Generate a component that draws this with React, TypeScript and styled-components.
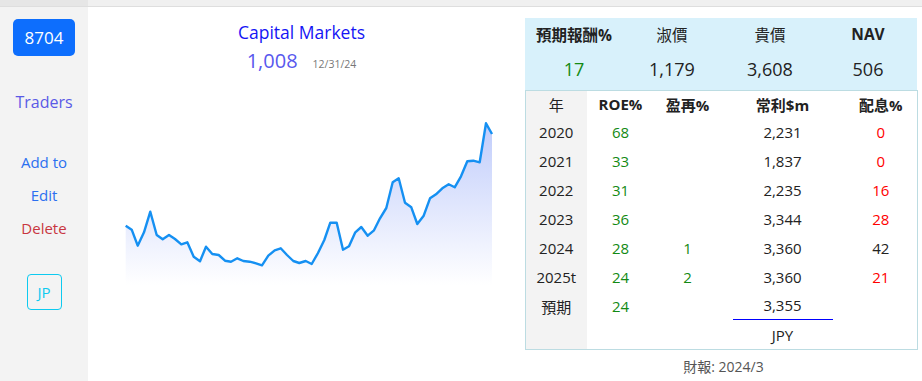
import React from "react";
import styled, { createGlobalStyle } from "styled-components";

const Global = createGlobalStyle`
  html, body { margin: 0; padding: 0; background: #fff; }
  body { font-family: "Open Sans", "Noto Sans CJK TC", sans-serif; color: #222; }
`;

const Page = styled.div`
  width: 922px;
  height: 381px;
  overflow: hidden;
  display: flex;
  flex-direction: column;
`;

const TopStrip = styled.div`
  height: 7px;
  display: flex;
  background: #f0f0f0;
  border-bottom: 1px solid #dedede;
  box-sizing: border-box;
`;

const TopStripSide = styled.div`
  width: 88px;
  background: #e6e6e6;
`;

const Main = styled.div`
  flex: 1;
  display: flex;
`;

const Sidebar = styled.div`
  width: 88px;
  background: #f3f3f3;
  display: flex;
  flex-direction: column;
  align-items: center;
  padding-top: 12px;
`;

const CodeButton = styled.div`
  width: 62px;
  height: 37px;
  border-radius: 5px;
  background: #0d6efd;
  color: #fff;
  font-size: 17px;
  display: flex;
  align-items: center;
  justify-content: center;
`;

const SideLink = styled.div<{ $color: string; $mt: number; $size?: number }>`
  color: ${(p) => p.$color};
  margin-top: ${(p) => p.$mt}px;
  font-size: ${(p) => p.$size ?? 15}px;
  line-height: 20px;
`;

const FlagBox = styled.div`
  margin-top: 36px;
  width: 35px;
  height: 36px;
  box-sizing: border-box;
  border: 1px solid #0dcaf0;
  border-radius: 4px;
  color: #0dcaf0;
  font-size: 15px;
  display: flex;
  align-items: center;
  justify-content: center;
`;

const ChartColumn = styled.div`
  flex: 1;
  display: flex;
  flex-direction: column;
  align-items: center;
  padding-top: 13px;
  padding-right: 10px;
`;

const Title = styled.div`
  color: #1515f5;
  font-size: 17.5px;
  line-height: 25px;
`;

const PriceRow = styled.div`
  display: flex;
  align-items: baseline;
  gap: 15px;
  margin-top: 2px;
`;

const Price = styled.span`
  color: #5858ee;
  font-size: 20px;
`;

const PriceDate = styled.span`
  color: #777;
  font-size: 10.5px;
`;

const ChartSvg = styled.svg`
  margin-top: 35px;
  margin-left: 15px;
  display: block;
`;

const RightColumn = styled.div`
  width: 392px;
  margin-right: 5px;
  padding-top: 11px;
  display: flex;
  flex-direction: column;
`;

const Summary = styled.div`
  background: #d8f1fb;
  height: 72px;
  display: grid;
  grid-template-columns: repeat(4, 1fr);
  grid-template-rows: 32px 40px;
  align-items: center;
  justify-items: center;
`;

const SumLabel = styled.div<{ $bold?: boolean }>`
  font-size: 15.5px;
  font-weight: ${(p) => (p.$bold ? 700 : 400)};
  color: #222;
`;

const SumValue = styled.div<{ $color?: string }>`
  font-size: 18px;
  color: ${(p) => p.$color ?? "#222"};
  padding-bottom: 2px;
`;

const Table = styled.table`
  border-collapse: collapse;
  border: 1px solid #bcdce2;
  width: 392px;
  table-layout: fixed;
  font-size: 15px;
`;

const Row = styled.tr<{ $h: number }>`
  height: ${(p) => p.$h}px;
`;

const Cell = styled.td<{ $color?: string; $bold?: boolean; $year?: boolean }>`
  text-align: center;
  padding: 0;
  color: ${(p) => p.$color ?? "#222"};
  font-weight: ${(p) => (p.$bold ? 700 : 400)};
  background: ${(p) => (p.$year ? "#f3f3f3" : "transparent")};
`;

const Underlined = styled.div`
  width: 100px;
  margin: 0 auto;
  border-bottom: 1px solid #0000ff;
  padding-top: 2px;
  padding-bottom: 4px;
`;

const Footer = styled.div`
  text-align: center;
  color: #555;
  font-size: 14px;
  margin-top: 6px;
  padding-left: 5px;
`;

const pts: [number, number][] = [
  [125.7, 226.7], [131.7, 230.7], [137.7, 246.7], [144, 233.3], [150.3, 212.7],
  [156.7, 236], [162.7, 240.3], [169, 236], [175, 240], [181.3, 245.3],
  [187.3, 243.3], [193.7, 257.7], [200, 262.3], [206, 247.7], [212.3, 255],
  [218.7, 256], [225, 261.7], [231, 262.7], [237.3, 259.3], [243.3, 262],
  [249.7, 262.7], [256, 264.3], [262, 266.3], [268.3, 256.7], [274.7, 251.3],
  [280.7, 249.3], [287, 256], [293.3, 262], [299.3, 264], [305.7, 262],
  [311.7, 265], [318, 254], [324.3, 241], [330.3, 223.7], [336.7, 223.7],
  [343, 250.7], [349, 247.3], [355.3, 233.3], [361.3, 228], [367.7, 236.7],
  [374, 231.3], [380, 219.3], [386.3, 209], [392.7, 183.3], [398.7, 179.3],
  [405, 203.7], [411.3, 208.3], [417.3, 225], [423.7, 216.7], [430, 199.3],
  [436, 195.3], [442.3, 189.3], [448.7, 185.3], [454.7, 188.3], [461, 177.3],
  [467.3, 162.3], [473.3, 161.7], [479.7, 163.3], [486, 124.3], [492, 135],
];

const OX = 124;
const OY = 110;
const line = pts.map(([x, y]) => `${(x - OX).toFixed(1)},${(y - OY).toFixed(1)}`).join(" ");
const area = `M${(pts[0][0] - OX).toFixed(1)},176 L${line.split(" ").join(" L")} L${(pts[pts.length - 1][0] - OX).toFixed(1)},176 Z`;

function Chart() {
  return (
    <ChartSvg width={370} height={180} viewBox="0 0 370 180">
      <defs>
        <linearGradient id="g" x1="0" y1="0" x2="0" y2="1">
          <stop offset="0" stopColor="#c0ccfb" />
          <stop offset="1" stopColor="#ffffff" />
        </linearGradient>
      </defs>
      <path d={area} fill="url(#g)" />
      <polyline points={line} fill="none" stroke="#1590f2" strokeWidth={2.4} strokeLinejoin="round" />
    </ChartSvg>
  );
}

type R = { y: string; roe?: string; re?: string; p: string; d?: string; dc?: string };
const rows: R[] = [
  { y: "2020", roe: "68", p: "2,231", d: "0", dc: "#ff0000" },
  { y: "2021", roe: "33", p: "1,837", d: "0", dc: "#ff0000" },
  { y: "2022", roe: "31", p: "2,235", d: "16", dc: "#ff0000" },
  { y: "2023", roe: "36", p: "3,344", d: "28", dc: "#ff0000" },
  { y: "2024", roe: "28", re: "1", p: "3,360", d: "42", dc: "#222" },
  { y: "2025t", roe: "24", re: "2", p: "3,360", d: "21", dc: "#ff0000" },
];

const GREEN = "#138a13";

export default function App() {
  return (
    <Page>
      <Global />
      <TopStrip>
        <TopStripSide />
      </TopStrip>
      <Main>
        <Sidebar>
          <CodeButton>8704</CodeButton>
          <SideLink $color="#5a5ae6" $mt={36} $size={16}>Traders</SideLink>
          <SideLink $color="#2b6ff0" $mt={40}>Add to</SideLink>
          <SideLink $color="#2b6ff0" $mt={13}>Edit</SideLink>
          <SideLink $color="#c8363f" $mt={13}>Delete</SideLink>
          <FlagBox>JP</FlagBox>
        </Sidebar>
        <ChartColumn>
          <Title>Capital Markets</Title>
          <PriceRow>
            <Price>1,008</Price>
            <PriceDate>12/31/24</PriceDate>
          </PriceRow>
          <Chart />
        </ChartColumn>
        <RightColumn>
          <Summary>
            <SumLabel $bold>預期報酬%</SumLabel>
            <SumLabel>淑價</SumLabel>
            <SumLabel>貴價</SumLabel>
            <SumLabel $bold>NAV</SumLabel>
            <SumValue $color={GREEN}>17</SumValue>
            <SumValue>1,179</SumValue>
            <SumValue>3,608</SumValue>
            <SumValue>506</SumValue>
          </Summary>
          <Table>
            <colgroup>
              <col style={{ width: 61 }} />
              <col style={{ width: 68 }} />
              <col style={{ width: 66 }} />
              <col style={{ width: 124 }} />
              <col style={{ width: 73 }} />
            </colgroup>
            <tbody>
              <Row $h={27}>
                <Cell $year>年</Cell>
                <Cell $bold>ROE%</Cell>
                <Cell $bold>盈再%</Cell>
                <Cell $bold>常利$m</Cell>
                <Cell $bold>配息%</Cell>
              </Row>
              {rows.map((r) => (
                <Row $h={29} key={r.y}>
                  <Cell $year>{r.y}</Cell>
                  <Cell $color={GREEN}>{r.roe}</Cell>
                  <Cell $color={GREEN}>{r.re}</Cell>
                  <Cell>{r.p}</Cell>
                  <Cell $color={r.dc}>{r.d}</Cell>
                </Row>
              ))}
              <Row $h={29}>
                <Cell $year>預期</Cell>
                <Cell $color={GREEN}>24</Cell>
                <Cell />
                <Cell>
                  <Underlined>3,355</Underlined>
                </Cell>
                <Cell />
              </Row>
              <Row $h={29}>
                <Cell $year />
                <Cell />
                <Cell />
                <Cell>JPY</Cell>
                <Cell />
              </Row>
            </tbody>
          </Table>
          <Footer>財報: 2024/3</Footer>
        </RightColumn>
      </Main>
    </Page>
  );
}
